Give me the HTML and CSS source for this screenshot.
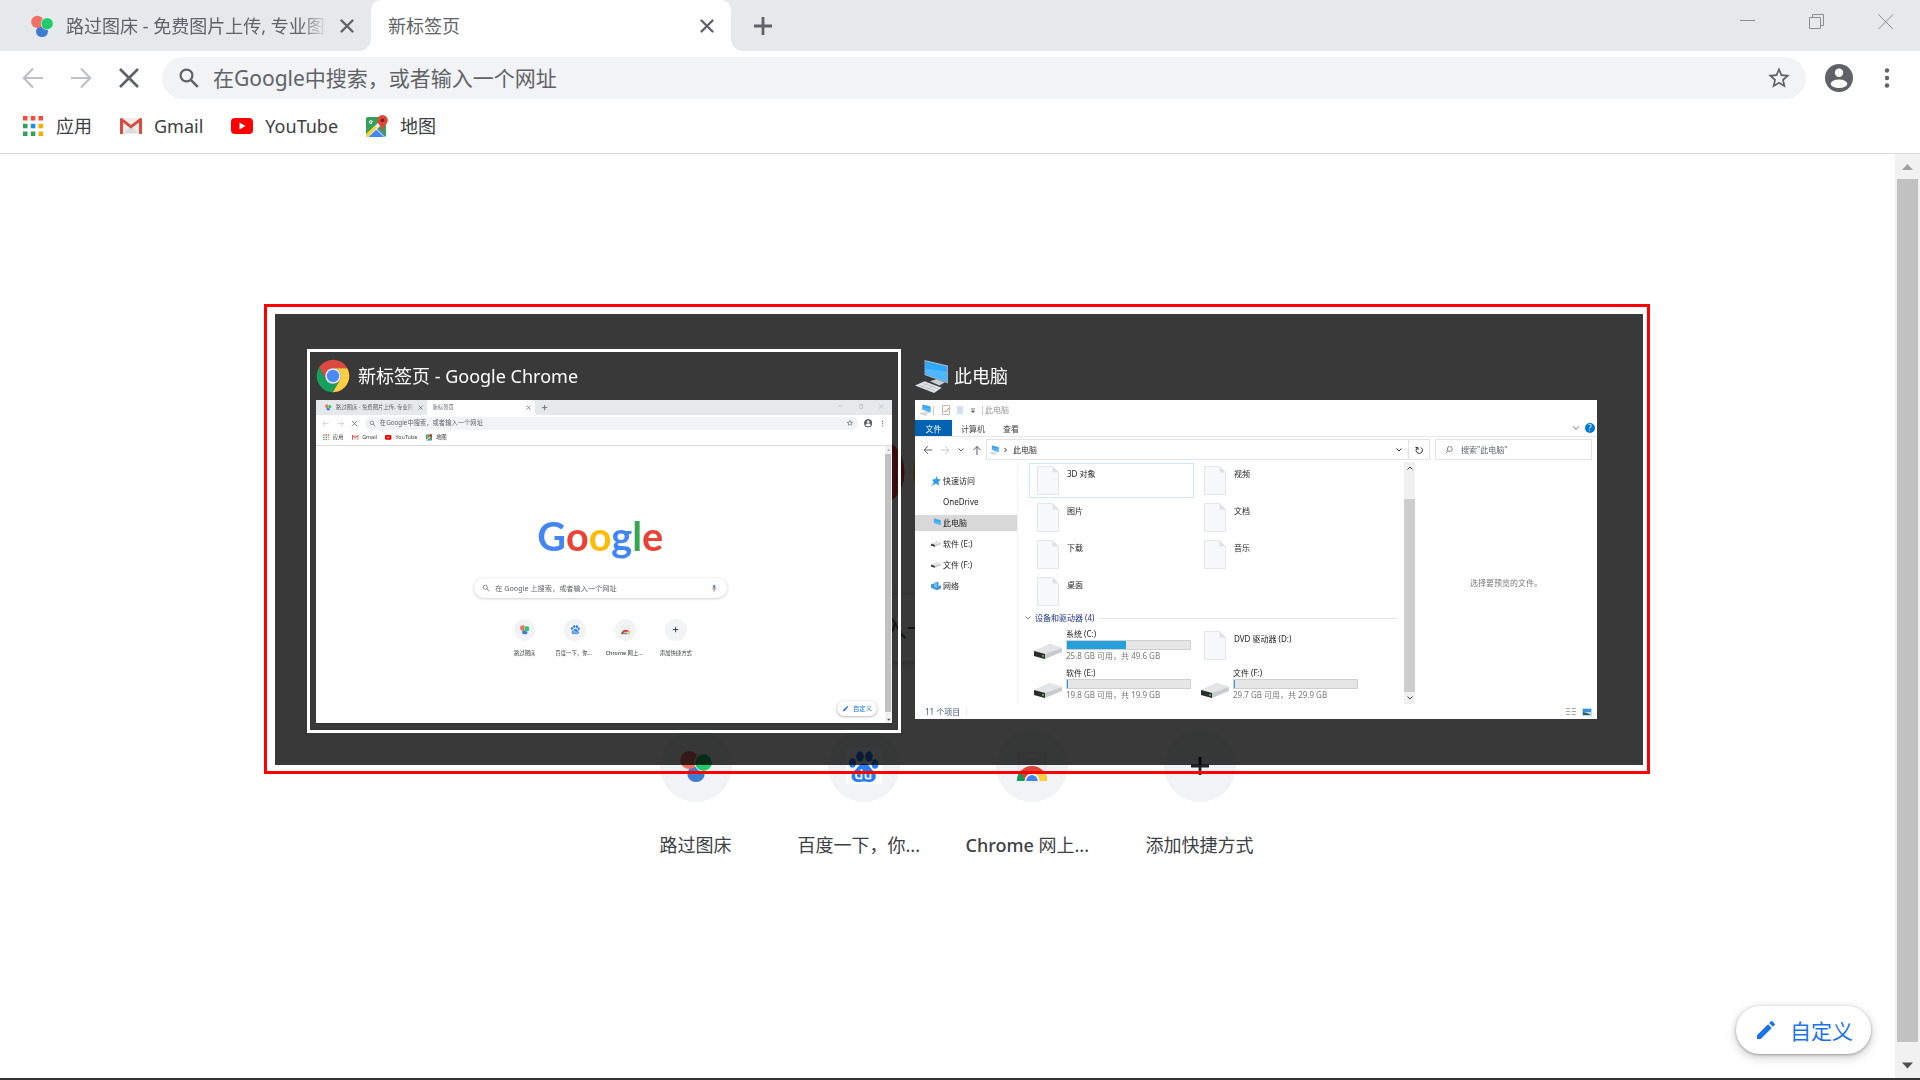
FILE: index.html
```html
<!DOCTYPE html>
<html lang="zh-CN">
  <head>
    <meta charset="utf-8" />
    <meta name="viewport" content="width=device-width, initial-scale=1" />
    <title>新标签页</title>
    <link rel="stylesheet" href="styles.css">
  </head>
  <body>

    <!-- icons used on the page -->
    <svg class="icon-defs" width="0" height="0">
      <symbol id="i-balloons" viewBox="0 0 24 24">
        <ellipse cx="12" cy="18" rx="6.500" ry="6" fill="#3f7bd0"/>
        <circle cx="7" cy="7.500" r="6.800" fill="#ee7164"/>
        <circle cx="17.500" cy="9.500" r="6.800" fill="#fff"/>
        <circle cx="17.600" cy="9.500" r="6.300" fill="#1fcb6c"/>
      </symbol>
      <symbol id="i-close" viewBox="0 0 24 24">
        <path d="M6.500 6.500l11 11M17.500 6.500l-11 11" stroke="currentColor" stroke-width="2.400" stroke-linecap="round" fill="none"/>
      </symbol>
      <symbol id="i-plus" viewBox="0 0 24 24">
        <path d="M12 3v18M3 12h18" stroke="currentColor" stroke-width="2.800" fill="none"/>
      </symbol>
      <symbol id="i-back" viewBox="0 0 24 24">
        <path d="M22 12H3.500M12 2.500L2.800 12l9.200 9.500" stroke="currentColor" stroke-width="2.200" fill="none"/>
      </symbol>
      <symbol id="i-forward" viewBox="0 0 24 24">
        <path d="M2 12h18.500M12 2.500l9.200 9.500-9.200 9.500" stroke="currentColor" stroke-width="2.200" fill="none"/>
      </symbol>
      <symbol id="i-stop" viewBox="0 0 24 24">
        <path d="M3 3l18 18M21 3L3 21" stroke="currentColor" stroke-width="2.700" fill="none"/>
      </symbol>
      <symbol id="i-search" viewBox="0 0 24 24">
        <circle cx="9.500" cy="9.500" r="5.900" stroke="currentColor" stroke-width="2.200" fill="none"/>
        <path d="M13.800 13.800l7 7" stroke="currentColor" stroke-width="2.600" fill="none"/>
      </symbol>
      <symbol id="i-star" viewBox="0 0 24 24">
        <path d="M22 9.240l-7.190-.62L12 2 9.190 8.630 2 9.240l5.460 4.730L5.820 21 12 17.270 18.180 21l-1.630-7.030L22 9.240zM12 15.400l-3.760 2.270 1-4.280-3.320-2.880 4.380-.38L12 6.100l1.710 4.040 4.380.38-3.320 2.880 1 4.280L12 15.400z" fill="currentColor"/>
      </symbol>
      <symbol id="i-account" viewBox="0 0 28 28">
        <circle cx="14" cy="14" r="14" fill="currentColor"/>
        <circle cx="14" cy="8.800" r="4.200" fill="#fff"/>
        <ellipse cx="14" cy="19.700" rx="8.300" ry="4.300" fill="#fff"/>
      </symbol>
      <symbol id="i-dots" viewBox="0 0 24 24">
        <g fill="currentColor"><circle cx="12" cy="4.500" r="2.200"/><circle cx="12" cy="12" r="2.200"/><circle cx="12" cy="19.500" r="2.200"/></g>
      </symbol>
      <symbol id="i-apps" viewBox="0 0 22 22">
        <path d="M1 1h4.500v4.500H1zM8.800 1h4.500v4.500H8.800zM16.500 1H21v4.500h-4.500z" fill="#fa4a3c"/>
        <path d="M1 8.800h4.500v4.500H1zM1 16.500h4.500V21H1zM8.800 16.500h4.500V21H8.800z" fill="#32a05a"/>
        <path d="M8.800 8.800h4.500v4.500H8.800z" fill="#1e8cf0"/>
        <path d="M16.500 8.800H21v4.500h-4.500zM16.500 16.500H21V21h-4.500z" fill="#f9ab00"/>
      </symbol>
      <symbol id="i-gmail" viewBox="0 0 22 22">
        <path d="M1 3h20v16H1z" fill="#ececec"/>
        <path d="M4 18l7-7 7 7z" fill="#dcdcdc"/>
        <path d="M0 4.500C0 3 1.200 2.800 2.200 3.200L11 10l8.800-6.800c1-.4 2.200-.2 2.200 1.300V19h-3V7.500l-8 6-8-6V19H0z" fill="#d84b3f"/>
      </symbol>
      <symbol id="i-youtube" viewBox="0 0 22 22">
        <rect x="0" y="3" width="22" height="16" rx="4" fill="#f00"/>
        <path d="M8.500 7.500l6 3.500-6 3.500z" fill="#fff"/>
      </symbol>
      <symbol id="i-maps" viewBox="0 0 22 22">
        <rect x="0" y="2" width="20" height="20" rx="2" fill="#34a15b"/>
        <path d="M10 11l9.500 10.500h-18z" fill="#4385f2"/>
        <path d="M0 19.500L17 3l3 3-9 8 8 8h-2.500L10 15l-7.500 7H1z" fill="#e8eaed"/>
        <path d="M0 19L9 10.500l2 2L2 22H1.500C.6 22 0 21 0 20z" fill="#fcd23c"/>
        <path d="M5 22l5.500-7L18 22z" fill="#4385f2"/>
        <path d="M7 6.500H5v1.200h1c-.8 1.600-3 .8-2.700-1 .3-1.500 1.800-1.500 2.500-.8" stroke="#fff" stroke-width="1" fill="none"/>
        <path d="M16.500 0a5.300 5.300 0 0 0-5.300 5.300c0 4 4.300 5 4.800 10.700h1c.5-5.700 4.800-6.700 4.800-10.700A5.300 5.300 0 0 0 16.500 0z" fill="#de483b"/>
        <circle cx="16.500" cy="5.300" r="1.900" fill="#7d211b"/>
      </symbol>
      <symbol id="i-mic" viewBox="0 0 24 24">
        <rect x="9" y="2" width="6" height="12" rx="3" fill="#4285f4"/>
        <path d="M11 18h2v4h-2z" fill="#34a853"/>
        <path d="M6.500 10.500c0 2 .6 3.700 1.700 4.900" stroke="#fbbc05" stroke-width="2" fill="none"/>
        <path d="M7.500 14.800c2.600 3.700 10 3 10-4.300" stroke="#ea4335" stroke-width="2" fill="none"/>
      </symbol>
      <symbol id="i-baidu" viewBox="0 0 36 36">
        <path d="M0 0h36v36H0z" fill="#fff"/>
        <g fill="#2a7cf7">
          <ellipse cx="14" cy="8.500" rx="3.800" ry="5.200"/>
          <ellipse cx="23" cy="8.500" rx="3.800" ry="5.200"/>
          <ellipse cx="6.500" cy="15" rx="3.600" ry="4.800"/>
          <ellipse cx="29" cy="16" rx="3.600" ry="4.800"/>
          <path d="M18 15.500c5 0 6 4.500 9 7 5 4.500 3 11.500-3 11.500-3 0-4-.6-6-.6s-3 .6-6 .6c-7 0-8.500-7.500-3.500-11.500 3.500-2.800 4.500-7 9.500-7z"/>
        </g>
        <path d="M15.500 21v9.500h-2.500c-4 0-4-6 0-6h2.500M19.500 24.500v4c0 1.500.6 2 2 2h3v-6" stroke="#fff" stroke-width="1.700" fill="none"/>
      </symbol>
      <symbol id="i-store" viewBox="0 0 30 30">
        <path d="M1 1h28v20H1z" fill="#ebedee"/>
        <path d="M10 5h10v2H10z" fill="#fff"/>
        <path d="M1 29a14 14 0 0 1 28 0z" fill="#db4437"/>
        <path d="M1 29c0-3.500 1-6.200 2.600-8.500L9.500 29z" fill="#0f9d58"/>
        <path d="M18 20h8c2 2.700 3 5.700 3 9H18z" fill="#ffcd40"/>
        <path d="M8 29a7 7 0 0 1 14 0z" fill="#fff"/>
        <path d="M9.500 29a5.500 5.500 0 0 1 11 0z" fill="#4285f4"/>
      </symbol>
      <symbol id="i-pencil" viewBox="0 0 24 24">
        <path d="M3 17.250V21h3.750L17.810 9.940l-3.750-3.750L3 17.250zM20.710 7.040a1 1 0 0 0 0-1.410l-2.340-2.340a1 1 0 0 0-1.410 0l-1.830 1.830 3.750 3.750 1.830-1.830z" fill="currentColor"/>
      </symbol>
      <symbol id="i-chrome" viewBox="0 0 48 48">
        <path d="M24 13h20.200A23 23 0 0 0 4.400 12l10.100 17.500A11 11 0 0 1 24 13z" fill="#db4a3e"/>
        <path d="M24 13h20.200A23 23 0 0 0 4.400 12l10.100 17.500A11 11 0 0 1 24 13z" fill="#ffcd42" transform="rotate(120 24 24)"/>
        <path d="M24 13h20.200A23 23 0 0 0 4.400 12l10.100 17.500A11 11 0 0 1 24 13z" fill="#17a05d" transform="rotate(240 24 24)"/>
        <circle cx="24" cy="24" r="11" fill="#f4f4f4"/>
        <circle cx="24" cy="24" r="8.800" fill="#4b8bf5"/>
      </symbol>
      <symbol id="i-pc" viewBox="0 0 32 32">
        <path d="M9 1l22 5v17L9 15z" fill="#9fb4c4"/>
        <path d="M9.500 2l20.500 5v14.500L9.500 14z" fill="#30a8fa"/>
        <path d="M9.500 9L30 12v9.500L9.500 14z" fill="#4db8ff"/>
        <path d="M14 21l6-2 8 3-5 3z" fill="#c5d0d8"/>
        <path d="M0 25l9-4 16 6-7 5z" fill="#dfe4e8"/>
        <path d="M4 25l15 5M8 23l14 5M5 27l7-4M11 29l6-4" stroke="#a8b0b6" stroke-width=".6"/>
      </symbol>
      <symbol id="i-file" viewBox="0 0 22 29">
        <path d="M.5.500h15l6 6v22H.5z" fill="#f7f8f9" stroke="#e3e5e7"/>
        <path d="M15.500.500l6 6h-6z" fill="#dfe1e3"/>
      </symbol>
      <symbol id="i-drive" viewBox="0 0 28 15">
        <path d="M0 7L16 0l12 4v4l-17 7L0 12z" fill="#c9cbcd"/>
        <path d="M0 7L16 0l12 4-17 6z" fill="#e4e5e7"/>
        <path d="M0 7l11 3v5L0 12z" fill="#2b2d2d"/>
        <circle cx="9" cy="12" r="1" fill="#4be04b"/>
      </symbol>
      <symbol id="i-pin" viewBox="0 0 10 10">
        <path d="M5.500 0l1 3L10 3.500 7.500 5.800 8 9.500 5 7.500 0 10l2.800-3.500L1 3.500l3.200-.3z" fill="#2f9be8"/>
      </symbol>
      <symbol id="i-net" viewBox="0 0 12 10">
        <path d="M4 1l5-1v5l3-1v4L7 10 0 7V3l4-1z" fill="#3d9bdc"/>
        <path d="M4 1l3 1v5L4 6z" fill="#7fc4f2"/>
      </symbol>
      <symbol id="i-down" viewBox="0 0 8 8">
        <path d="M1.500 2.500L4 5l2.500-2.500" stroke="currentColor" fill="none"/>
      </symbol>
      <symbol id="i-up" viewBox="0 0 8 8">
        <path d="M1.500 5.500L4 3l2.500 2.500" stroke="currentColor" fill="none"/>
      </symbol>
      <symbol id="i-right" viewBox="0 0 8 8">
        <path d="M2.500 2l2 2-2 2" stroke="currentColor" fill="none"/>
      </symbol>
    </svg>

    <!-- browser window -->
    <div class="browser">
      <header class="tab-strip">
        <div class="tab">
          <svg class="tab-icon"><use href="#i-balloons"/></svg>
          <span class="tab-title faded">路过图床 - 免费图片上传, 专业图</span>
          <button class="tab-close" aria-label="关闭标签页"><svg><use href="#i-close"/></svg></button>
        </div>
        <div class="tab active">
          <span class="tab-title">新标签页</span>
          <button class="tab-close" aria-label="关闭标签页"><svg><use href="#i-close"/></svg></button>
        </div>
        <button class="new-tab" aria-label="新建标签页"><svg><use href="#i-plus"/></svg></button>
        <div class="window-buttons">
          <button aria-label="最小化"><svg viewBox="0 0 16 16"><path d="M0 6.500h15"/></svg></button>
          <button aria-label="还原"><svg viewBox="0 0 16 16"><path d="M.5 3.500h11v11H.5zM3.500 3.500v-3h11v11h-3"/></svg></button>
          <button aria-label="关闭"><svg viewBox="0 0 16 16"><path d="M.5.500l14.500 14.500M15 .5L.5 15"/></svg></button>
        </div>
      </header>

      <div class="toolbar">
        <button class="dim" aria-label="返回"><svg><use href="#i-back"/></svg></button>
        <button class="dim" aria-label="前进"><svg><use href="#i-forward"/></svg></button>
        <button aria-label="停止"><svg><use href="#i-stop"/></svg></button>
        <label class="omnibox">
          <svg><use href="#i-search"/></svg>
          <input type="text" placeholder="在Google中搜索，或者输入一个网址" aria-label="地址栏">
          <svg class="star"><use href="#i-star"/></svg>
        </label>
        <button aria-label="用户"><svg class="account"><use href="#i-account"/></svg></button>
        <button aria-label="菜单"><svg><use href="#i-dots"/></svg></button>
      </div>

      <nav class="bookmarks">
        <a href="#"><svg><use href="#i-apps"/></svg>应用</a>
        <a href="#"><svg><use href="#i-gmail"/></svg>Gmail</a>
        <a href="#"><svg><use href="#i-youtube"/></svg>YouTube</a>
        <a href="#"><svg><use href="#i-maps"/></svg>地图</a>
      </nav>

      <div class="viewport">
        <main class="new-tab-page">
          <div class="logo"><span class="blue">G</span><span class="red">o</span><span class="yellow">o</span><span class="blue">g</span><span class="green">l</span><span class="red">e</span></div>
          <label class="search-box">
            <svg><use href="#i-search"/></svg>
            <input type="text" placeholder="在 Google 上搜索，或者输入一个网址" aria-label="搜索">
            <svg><use href="#i-mic"/></svg>
          </label>
          <div class="shortcuts">
            <a href="#"><span class="circle"><svg><use href="#i-balloons"/></svg></span><span class="label">路过图床</span></a>
            <a href="#"><span class="circle"><svg class="large"><use href="#i-baidu"/></svg></span><span class="label long">百度一下，你...</span></a>
            <a href="#"><span class="circle"><svg><use href="#i-store"/></svg></span><span class="label long"><b>Chrome</b> 网上...</span></a>
            <a href="#"><span class="circle"><svg class="small"><use href="#i-plus"/></svg></span><span class="label">添加快捷方式</span></a>
          </div>
          <button class="customize"><svg><use href="#i-pencil"/></svg>自定义</button>
        </main>
        <div class="scrollbar">
          <svg class="arrow" viewBox="0 0 25 25"><path d="M7 16l5.500-6 5.500 6z" fill="#a0a0a0"/></svg>
          <div class="track"><div class="thumb"></div></div>
          <svg class="arrow" viewBox="0 0 25 25"><path d="M7 9.500l5.500 6 5.500-6z" fill="#505050"/></svg>
        </div>
      </div>
    </div>

    <!-- window switcher -->
    <div class="overlay">
      <div class="frame">
        <div class="switcher">
          <section class="window-item selected">
            <h2><svg><use href="#i-chrome"/></svg>新标签页 - Google Chrome</h2>
            <div class="preview" id="browserPreview"></div>
          </section>

          <section class="window-item wide">
            <h2><svg><use href="#i-pc"/></svg>此电脑</h2>
            <div class="explorer">
              <div class="ex-title">
                <svg class="s12"><use href="#i-pc"/></svg>
                <i class="sep"></i>
                <svg class="s10 check" viewBox="0 0 10 10"><path d="M1.500.500h7v9h-7z" fill="#fff" stroke="#bbb"/><path d="M3 5.500L4.500 7 8 3" stroke="#f0783c" fill="none"/></svg>
                <svg class="s10" viewBox="0 0 10 10"><path d="M2 1h6v8H2z" fill="#d3dff3"/></svg>
                <svg class="s10 caret" viewBox="0 0 10 10"><path d="M3 4h4M3.500 6h3L5 7.500z" stroke="#555" fill="#555" stroke-width=".8"/></svg>
                <i class="sep"></i>
                <span>此电脑</span>
              </div>
              <div class="ex-tabs">
                <button class="file-tab">文件</button>
                <button>计算机</button>
                <button>查看</button>
                <svg class="s10 collapse"><use href="#i-down"/></svg>
                <span class="help">?</span>
              </div>
              <div class="ex-address">
                <svg class="s10"><use href="#i-back"/></svg>
                <svg class="s10 dim"><use href="#i-forward"/></svg>
                <svg class="s8"><use href="#i-down"/></svg>
                <svg class="s10" viewBox="0 0 10 10"><path d="M5 10V1.500M1.500 5L5 1.500 8.500 5" stroke="currentColor" fill="none"/></svg>
                <div class="path">
                  <svg class="s10"><use href="#i-pc"/></svg>
                  <svg class="s8"><use href="#i-right"/></svg>
                  <span>此电脑</span>
                  <svg class="s8 end"><use href="#i-down"/></svg>
                  <span class="refresh"><svg class="s8" viewBox="0 0 8 8"><path d="M6 1.500A3.200 3.200 0 1 1 2 2M.5 1.500H3V4" stroke="currentColor" fill="none"/></svg></span>
                </div>
                <label class="ex-search">
                  <svg class="s8" viewBox="0 0 8 8"><circle cx="4.800" cy="3" r="2.500" stroke="currentColor" stroke-width=".7" fill="none"/><path d="M3 5L.5 7.500" stroke="currentColor" stroke-width=".7"/></svg>
                  <input type="text" placeholder="搜索&quot;此电脑&quot;" aria-label="搜索此电脑">
                </label>
              </div>
              <div class="ex-body">
                <nav class="tree">
                  <a href="#"><svg><use href="#i-pin"/></svg>快速访问</a>
                  <a href="#"><svg></svg>OneDrive</a>
                  <a href="#" class="current"><svg><use href="#i-pc"/></svg>此电脑</a>
                  <a href="#"><svg><use href="#i-drive"/></svg>软件 (E:)</a>
                  <a href="#"><svg><use href="#i-drive"/></svg>文件 (F:)</a>
                  <a href="#"><svg><use href="#i-net"/></svg>网络</a>
                </nav>
                <div class="files">
                  <div class="file-grid">
                    <div class="file focus"><svg><use href="#i-file"/></svg>3D 对象</div>
                    <div class="file"><svg><use href="#i-file"/></svg>视频</div>
                    <div class="file"><svg><use href="#i-file"/></svg>图片</div>
                    <div class="file"><svg><use href="#i-file"/></svg>文档</div>
                    <div class="file"><svg><use href="#i-file"/></svg>下载</div>
                    <div class="file"><svg><use href="#i-file"/></svg>音乐</div>
                    <div class="file"><svg><use href="#i-file"/></svg>桌面</div>
                  </div>
                  <h3><svg class="s8"><use href="#i-down"/></svg>设备和驱动器 (4)</h3>
                  <div class="drive-grid">
                    <div class="drive">
                      <svg><use href="#i-drive"/></svg>
                      <div><span>系统 (C:)</span><div class="bar"><div style="width: 48%"></div></div><small>25.8 GB 可用，共 49.6 GB</small></div>
                    </div>
                    <div class="file"><svg><use href="#i-file"/></svg>DVD 驱动器 (D:)</div>
                    <div class="drive">
                      <svg><use href="#i-drive"/></svg>
                      <div><span>软件 (E:)</span><div class="bar"><div style="width: 1%"></div></div><small>19.8 GB 可用，共 19.9 GB</small></div>
                    </div>
                    <div class="drive">
                      <svg><use href="#i-drive"/></svg>
                      <div><span>文件 (F:)</span><div class="bar"><div style="width: 1%"></div></div><small>29.7 GB 可用，共 29.9 GB</small></div>
                    </div>
                  </div>
                </div>
                <div class="ex-scroll">
                  <svg><use href="#i-up"/></svg>
                  <div class="ex-thumb"></div>
                  <svg><use href="#i-down"/></svg>
                </div>
                <div class="ex-preview">选择要预览的文件。</div>
              </div>
              <div class="ex-status">
                <span>11 个项目</span>
                <i class="sep light"></i>
                <svg class="s10 end" viewBox="0 0 10 10"><path d="M0 1.500h4M0 4.500h4M0 7.500h4" stroke="#b9a49c"/><path d="M5.500 1.500H10M5.500 4.500H10M5.500 7.500H10" stroke="#aaa"/></svg>
                <svg class="s10" viewBox="0 0 10 10"><path d="M0 1h10v8H0z" fill="#b9dcf5"/><path d="M1 2h8v3H1z" fill="#3c8fd8"/><path d="M1 5l4 1 4 2H1z" fill="#2d5c55"/></svg>
              </div>
            </div>
          </section>
        </div>
      </div>
    </div>

    <script src="script.js"></script>
  </body>
</html>
```
FILE: styles.css
```css
* {
     box-sizing: border-box;
}

body {
     margin: 0;
     font-family: "Noto Sans", "Noto Sans CJK SC", sans-serif;
     color: #3c4043;
     overflow: hidden;
}

a {
     color: inherit;
     text-decoration: none;
}

button {
     padding: 0;
     border: none;
     background: none;
     font-family: inherit;
     color: inherit;
     display: flex;
     align-items: center;
     justify-content: center;
     cursor: pointer;
}

input {
     flex: 1;
     min-width: 0;
     padding: 0;
     border: none;
     outline: none;
     background: none;
     font-family: inherit;
}

svg {
     flex: none;
}

.icon-defs {
     position: absolute;
}

/* browser window */
.browser {
     display: flex;
     flex-direction: column;
     height: 100vh;
     background: #fff;
     border-bottom: 2px solid #333;
}

.tab-strip {
     display: flex;
     height: 51px;
     padding-left: 11px;
     background: #e5e9ec;
     color: #5f6368;
}

.tab {
     display: flex;
     align-items: center;
     width: 360px;
     padding: 0 12px 0 20px;
     position: relative;
}

.tab.active {
     padding-left: 17px;
     background: #fff;
     border-radius: 10px 10px 0 0;
}

.tab.active::before,
.tab.active::after {
     content: "";
     position: absolute;
     bottom: 0;
     width: 12px;
     height: 12px;
}

.tab.active::before {
     left: -12px;
     background: radial-gradient(circle at 0 0, transparent 12px, #fff 12px);
}

.tab.active::after {
     right: -12px;
     background: radial-gradient(circle at 100% 0, transparent 12px, #fff 12px);
}

.tab-icon {
     width: 22px;
     height: 22px;
     margin-right: 13px;
}

.tab-title {
     flex: 1;
     font-size: 18px;
     line-height: 24px;
     white-space: nowrap;
     overflow: hidden;
}

.tab-title.faded {
     margin-right: 8px;
     -webkit-mask-image: linear-gradient(to right, #000 90%, transparent);
     mask-image: linear-gradient(to right, #000 90%, transparent);
}

.tab-close svg {
     width: 24px;
     height: 24px;
}

.new-tab {
     width: 40px;
     margin-left: 12px;
}

.new-tab svg {
     width: 24px;
     height: 24px;
}

.window-buttons {
     display: flex;
     height: 43px;
     margin-left: auto;
}

.window-buttons button {
     width: 69px;
}

.window-buttons svg {
     width: 16px;
     height: 16px;
     fill: none;
     stroke: #8b8f92;
}

.toolbar {
     display: flex;
     align-items: center;
     padding: 6px 9px 0;
     color: #5f6368;
}

.toolbar button {
     width: 48px;
     height: 42px;
}

.toolbar svg {
     width: 24px;
     height: 24px;
}

.toolbar .account {
     width: 28px;
     height: 28px;
}

.dim {
     color: #bdc1c6;
}

.omnibox {
     flex: 1;
     display: flex;
     align-items: center;
     gap: 12px;
     height: 42px;
     margin: 0 9px;
     padding: 0 14px 0 15px;
     border-radius: 21px;
     background: #f1f3f4;
}

.omnibox input {
     font-size: 21px;
     line-height: 28px;
}

.omnibox .star {
     width: 26px;
     height: 26px;
}

input::placeholder {
     color: #5f6368;
     opacity: 1;
}

.bookmarks {
     display: flex;
     align-items: center;
     gap: 28px;
     height: 55px;
     padding: 0 22px;
     border-bottom: 1px solid #dadce0;
     font-size: 18px;
     line-height: 24px;
}

.bookmarks a {
     display: flex;
     align-items: center;
     gap: 12px;
}

.bookmarks svg {
     width: 22px;
     height: 22px;
}

.viewport {
     flex: 1;
     display: flex;
     min-height: 0;
}

.new-tab-page {
     flex: 1;
     display: flex;
     flex-direction: column;
     align-items: center;
     position: relative;
     padding-top: 221px;
}

.logo {
     font-family: Lato, sans-serif;
     font-weight: 700;
     font-size: 132px;
     line-height: 160px;
     margin-bottom: 60px;
}

.blue {
     color: #4285f4;
}

.red {
     color: #ea4335;
}

.yellow {
     color: #fbbc05;
}

.green {
     color: #34a853;
}

.search-box {
     display: flex;
     align-items: center;
     gap: 15px;
     width: 844px;
     height: 66px;
     padding: 0 29px;
     border-radius: 33px;
     box-shadow: 0 2px 8px 1px rgba(64, 60, 67, .24);
}

.search-box svg {
     width: 28px;
     height: 28px;
     color: #70757a;
}

.search-box input {
     font-size: 24px;
     line-height: 32px;
}

.shortcuts {
     display: flex;
     margin-top: 69px;
}

.shortcuts a {
     display: flex;
     flex-direction: column;
     align-items: center;
     gap: 31px;
     width: 168px;
}

.circle {
     display: flex;
     align-items: center;
     justify-content: center;
     width: 72px;
     height: 72px;
     border-radius: 50%;
     background: #f1f3f4;
     color: #202124;
}

.circle svg {
     width: 32px;
     height: 32px;
}

.circle .large {
     width: 36px;
     height: 36px;
}

.circle .small {
     width: 24px;
     height: 24px;
}

.label {
     font-size: 18px;
     line-height: 24px;
     white-space: nowrap;
}

.label.long {
     width: 132px;
}

.label b {
     font-weight: 500;
}

.customize {
     position: absolute;
     right: 24px;
     bottom: 24px;
     gap: 12px;
     height: 48px;
     padding: 0 18px;
     border-radius: 24px;
     background: #fff;
     color: #1a73e8;
     font-size: 21px;
     box-shadow: 0 1px 3px rgba(0, 0, 0, .3), 0 3px 8px 2px rgba(0, 0, 0, .15);
}

.customize svg {
     width: 24px;
     height: 24px;
}

.scrollbar {
     display: flex;
     flex-direction: column;
     width: 25px;
     background: #f1f1f1;
}

.arrow {
     width: 25px;
     height: 25px;
}

.track {
     flex: 1;
     padding: 0 2px;
}

.thumb {
     height: 98.7%;
     background: #c1c1c1;
}

/* window switcher */
.overlay {
     position: fixed;
     inset: 0;
     display: flex;
     align-items: center;
     padding: 0 270px 2px 264px;
}

.frame {
     flex: 1;
     padding: 7px 4px 6px 8px;
     border: 3px solid #f00;
}

.switcher {
     display: flex;
     align-items: flex-start;
     gap: 5px;
     padding: 35px 37px 32px 32px;
     background: rgba(0, 0, 0, .775);
}

.window-item {
     padding: 0 6px 6px;
     border: 3px solid transparent;
}

.window-item.selected {
     border-color: #fff;
}

.window-item.wide {
     flex: 1;
}

.window-item h2 {
     display: flex;
     align-items: center;
     gap: 8px;
     height: 48px;
     margin: 0;
     color: #fff;
     font-size: 18px;
     font-weight: 400;
     line-height: 24px;
}

.window-item h2 svg {
     width: 34px;
     height: 34px;
}

.window-item.wide h2 {
     gap: 5px;
}

.preview {
     width: 30vw;
     aspect-ratio: 16 / 9;
     overflow: hidden;
}

.preview .browser {
     zoom: .3;
     height: 100%;
}

/* file explorer */
.explorer {
     background: #fff;
     color: #222;
     font-size: 8px;
     line-height: 12px;
}

.s12 {
     width: 12px;
     height: 12px;
}

.s10 {
     width: 10px;
     height: 10px;
}

.s8 {
     width: 8px;
     height: 8px;
}

.sep {
     width: 1px;
     height: 9px;
     background: #ccc;
}

.sep.light {
     background: #eee;
}

.end {
     margin-left: auto;
}

.ex-title {
     display: flex;
     align-items: center;
     gap: 2px;
     height: 20px;
     padding-left: 4px;
     color: #999;
}

.check {
     margin-left: 5px;
     margin-right: 2px;
}

.caret {
     margin: 0 2px 0 1px;
}

.ex-tabs {
     display: flex;
     align-items: center;
     height: 17px;
     border-bottom: 1px solid #e8e8e8;
}

.ex-tabs button {
     height: 16px;
     padding: 0 9px;
     font-size: 8px;
     color: #444;
}

.ex-tabs .file-tab {
     width: 37px;
     background: #0063b1;
     color: #fff;
}

.collapse {
     margin-left: auto;
     color: #aaa;
}

.help {
     width: 10px;
     height: 10px;
     margin: 0 2px 0 4px;
     border-radius: 50%;
     background: #0078d7;
     color: #fff;
     line-height: 10px;
     text-align: center;
}

.ex-address {
     display: flex;
     align-items: center;
     gap: 7px;
     height: 25px;
     padding: 0 5px 0 8px;
     color: #555;
}

.path {
     flex: 1;
     display: flex;
     align-items: center;
     gap: 3px;
     height: 21px;
     margin-left: -3px;
     padding-left: 2px;
     border: 1px solid #e3e3e3;
     color: #333;
}

.refresh {
     display: flex;
     align-items: center;
     justify-content: center;
     width: 21px;
     height: 19px;
     margin-left: 2px;
     border-left: 1px solid #e3e3e3;
}

.ex-search {
     display: flex;
     align-items: center;
     gap: 8px;
     width: 157px;
     height: 21px;
     margin-left: -2px;
     padding-left: 9px;
     border: 1px solid #e3e3e3;
}

.ex-search input {
     font-size: 8px;
     line-height: 12px;
}

.ex-body {
     display: flex;
     height: 242px;
}

.tree {
     display: flex;
     flex-direction: column;
     gap: 5px;
     width: 103px;
     padding-top: 11px;
     border-right: 1px solid #f0f0f0;
}

.tree a {
     display: flex;
     align-items: center;
     gap: 2px;
     height: 16px;
     padding-left: 16px;
}

.tree svg {
     width: 10px;
     height: 10px;
}

.tree .current {
     background: #d9d9d9;
}

.files {
     flex: 1;
     padding: 1px 6px 0 11px;
}

.file-grid {
     display: grid;
     grid-template-columns: 165px 165px;
     gap: 2px;
}

.file {
     display: flex;
     gap: 8px;
     height: 35px;
     padding: 2px 0 0 7px;
     border: 1px solid transparent;
     line-height: 16px;
}

.file.focus {
     border-color: #cce8ff;
}

.file svg {
     width: 22px;
     height: 29px;
}

.files h3 {
     display: flex;
     align-items: center;
     gap: 3px;
     margin: 2px 0 0 -5px;
     color: #1e3287;
     font-size: 8px;
     font-weight: 400;
     line-height: 14px;
}

.files h3 svg {
     color: #888;
}

.files h3::after {
     content: "";
     flex: 1;
     height: 1px;
     margin-left: 2px;
     background: #e5e5e5;
}

.drive-grid {
     display: grid;
     grid-template-columns: 165px 165px;
     gap: 4px 2px;
     padding-top: 3px;
}

.drive {
     display: flex;
     gap: 4px;
     height: 35px;
     padding-left: 5px;
     line-height: 12px;
}

.drive > svg {
     width: 28px;
     height: 15px;
     margin-top: 16px;
}

.drive span,
.drive small {
     display: block;
     font-size: 8px;
     white-space: nowrap;
}

.drive small {
     color: #777;
}

.bar {
     width: 125px;
     height: 10px;
     border: 1px solid #d0d0d0;
     background: #e6e6e6;
}

.bar div {
     height: 8px;
     background: #26a0da;
}

.ex-scroll {
     display: flex;
     flex-direction: column;
     align-items: center;
     width: 11px;
     background: #f0f0f0;
     color: #444;
}

.ex-scroll svg {
     width: 8px;
     height: 12px;
}

.ex-thumb {
     flex: 1;
     width: 11px;
     margin-top: 25px;
     background: #cdcdcd;
}

.ex-preview {
     display: flex;
     align-items: center;
     justify-content: center;
     width: 182px;
     color: #777;
}

.ex-status {
     display: flex;
     align-items: center;
     gap: 6px;
     height: 15px;
     padding: 0 5px 0 10px;
     color: #3c5a78;
}
```
FILE: script.js
```js
// the switcher preview of the browser is a small copy of the browser itself
var browser = document.querySelector(".browser");
var preview = document.getElementById("browserPreview");
var copy = browser.cloneNode(true);
copy.setAttribute("aria-hidden", "true");
copy.inert = true;
preview.appendChild(copy);
```
